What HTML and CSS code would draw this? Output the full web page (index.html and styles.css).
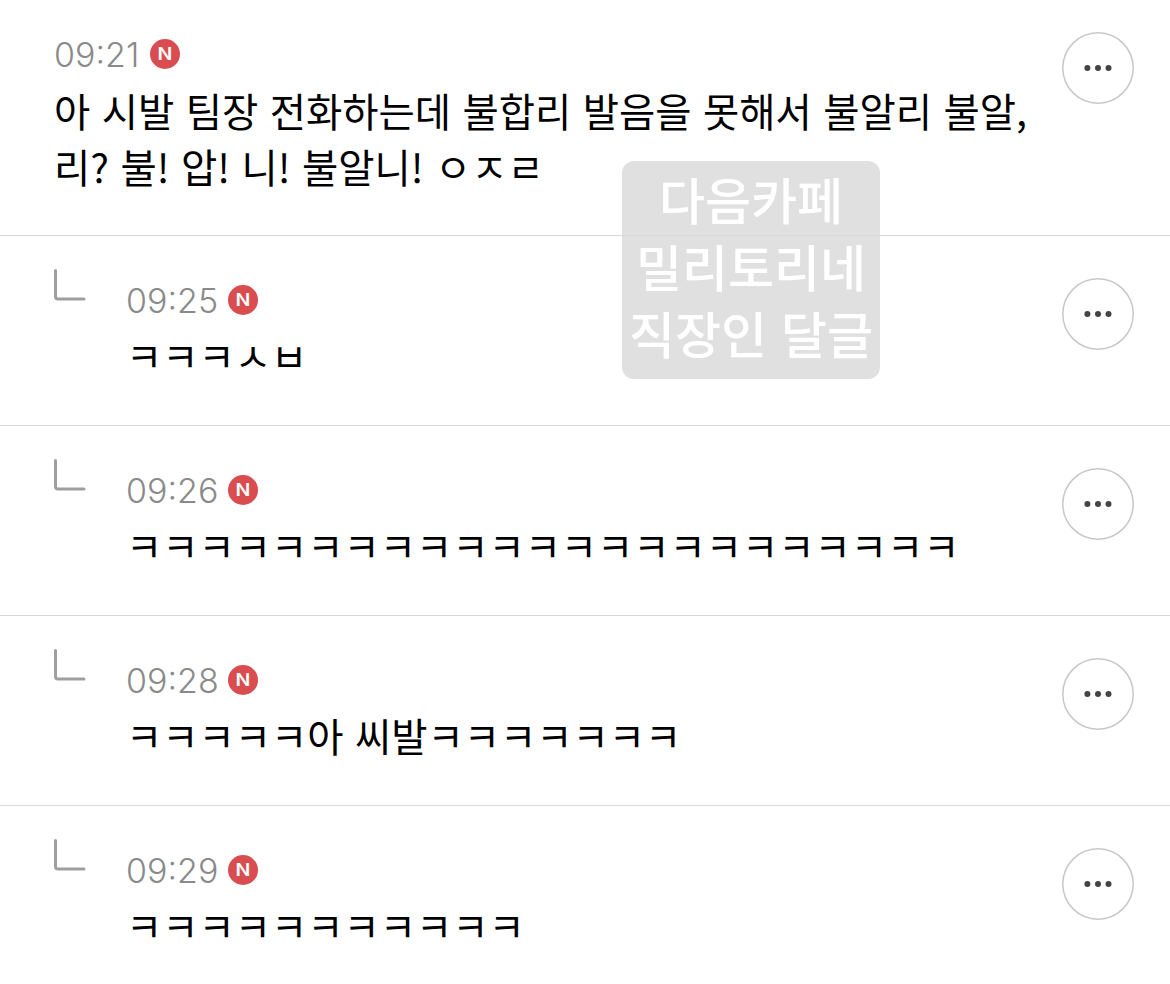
FILE: index.html
```
<!DOCTYPE html>
<html lang="ko">
<head>
    <meta charset="UTF-8">
    <meta name="viewport" content="width=device-width, initial-scale=1.0">
    <title>댓글</title>
    <link rel="stylesheet" href="styles.css">
</head>
<body>
    <svg class="sprite" aria-hidden="true">
        <symbol id="icon-more" viewBox="0 0 72 72">
            <circle cx="36" cy="36" r="35.2" fill="none" stroke="#c8c8c8" stroke-width="1.5"/>
            <circle cx="25.4" cy="36" r="3"/>
            <circle cx="36" cy="36" r="3"/>
            <circle cx="46.5" cy="36" r="3"/>
        </symbol>
        <symbol id="icon-reply" viewBox="0 0 32 32">
            <path d="M1.5 1.5V27.5Q1.5 30 4 30H30" fill="none" stroke="#9f9f9f" stroke-width="3" stroke-linecap="round"/>
        </symbol>
    </svg>

    <div class="comments">
        <div class="comment">
            <div class="content">
                <div class="meta"><span class="time">09:21</span><span class="new"><span>N</span></span></div>
                <p class="text">아 시발 팀장 전화하는데 불합리 발음을 못해서 불알리 불알,<br>리? 불! 압! 니! 불알니! ㅇㅈㄹ</p>
            </div>
            <button class="more" aria-label="더보기"><svg><use href="#icon-more"/></svg></button>
        </div>
        <div class="comment reply">
            <svg class="branch"><use href="#icon-reply"/></svg>
            <div class="content">
                <div class="meta"><span class="time">09:25</span><span class="new"><span>N</span></span></div>
                <p class="text">ㅋㅋㅋㅅㅂ</p>
            </div>
            <button class="more" aria-label="더보기"><svg><use href="#icon-more"/></svg></button>
        </div>
        <div class="comment reply">
            <svg class="branch"><use href="#icon-reply"/></svg>
            <div class="content">
                <div class="meta"><span class="time">09:26</span><span class="new"><span>N</span></span></div>
                <p class="text">ㅋㅋㅋㅋㅋㅋㅋㅋㅋㅋㅋㅋㅋㅋㅋㅋㅋㅋㅋㅋㅋㅋㅋ</p>
            </div>
            <button class="more" aria-label="더보기"><svg><use href="#icon-more"/></svg></button>
        </div>
        <div class="comment reply">
            <svg class="branch"><use href="#icon-reply"/></svg>
            <div class="content">
                <div class="meta"><span class="time">09:28</span><span class="new"><span>N</span></span></div>
                <p class="text">ㅋㅋㅋㅋㅋ아 씨발ㅋㅋㅋㅋㅋㅋㅋ</p>
            </div>
            <button class="more" aria-label="더보기"><svg><use href="#icon-more"/></svg></button>
        </div>
        <div class="comment reply">
            <svg class="branch"><use href="#icon-reply"/></svg>
            <div class="content">
                <div class="meta"><span class="time">09:29</span><span class="new"><span>N</span></span></div>
                <p class="text">ㅋㅋㅋㅋㅋㅋㅋㅋㅋㅋㅋ</p>
            </div>
            <button class="more" aria-label="더보기"><svg><use href="#icon-more"/></svg></button>
        </div>
        <div class="watermark">다음카페<br>밀리토리네<br>직장인 달글</div>
    </div>
</body>
</html>
```
FILE: styles.css
```
* {
    box-sizing: border-box;
}
body {
    margin: 0;
    background: #fff;
    color: #000;
    font-family: Inter, "Noto Sans CJK KR", sans-serif;
    overflow: hidden;
}
.sprite {
    display: none;
}
.comments {
    position: relative;
    isolation: isolate;
}
.comment {
    display: flex;
    height: 190px;
    padding: 42px 36px 0 54px;
    border-bottom: 1px solid #d8d8d8;
}
.comment:first-child {
    height: 236px;
    padding-top: 32px;
}
.comment:nth-child(5) {
    border-bottom: none;
}
.content {
    flex: 1;
    min-width: 0;
}
.branch {
    flex: none;
    width: 32px;
    height: 32px;
    margin: -9px 40px 0 0;
}
.meta {
    display: flex;
    align-items: center;
    height: 44px;
}
.time {
    width: 96px;
    padding-top: 2px;
    color: #8a8a8a;
    font-size: 34px;
    font-weight: 300;
    line-height: 42px;
}
.reply .time {
    width: 102px;
}
.new {
    width: 30px;
    height: 30px;
    border-radius: 50%;
    background: #d94c4f;
    color: #fff;
    font-size: 17px;
    font-weight: 600;
    line-height: 30px;
    text-align: center;
}
.new span {
    display: block;
    transform: scaleX(1.15);
}
.text {
    margin: 6px 0 0;
    font-family: "Noto Sans CJK KR", sans-serif;
    font-size: 39.4px;
    line-height: 56px;
    word-spacing: 0.5px;
    white-space: nowrap;
}
.reply .text {
    margin-top: 5px;
}
.more {
    flex: none;
    width: 72px;
    height: 72px;
    padding: 0;
    border: none;
    background: none;
}
.more svg {
    display: block;
    width: 72px;
    height: 72px;
    fill: #444;
}
/* sits under the row borders */
.watermark {
    position: absolute;
    z-index: -1;
    left: 622px;
    top: 161px;
    width: 258px;
    height: 218px;
    padding-top: 4px;
    border-radius: 12px;
    background: #e0e0e0;
    color: #fff;
    font-family: "Noto Sans CJK KR", sans-serif;
    font-size: 50px;
    font-weight: 500;
    line-height: 67px;
    text-align: center;
    white-space: nowrap;
}
```
